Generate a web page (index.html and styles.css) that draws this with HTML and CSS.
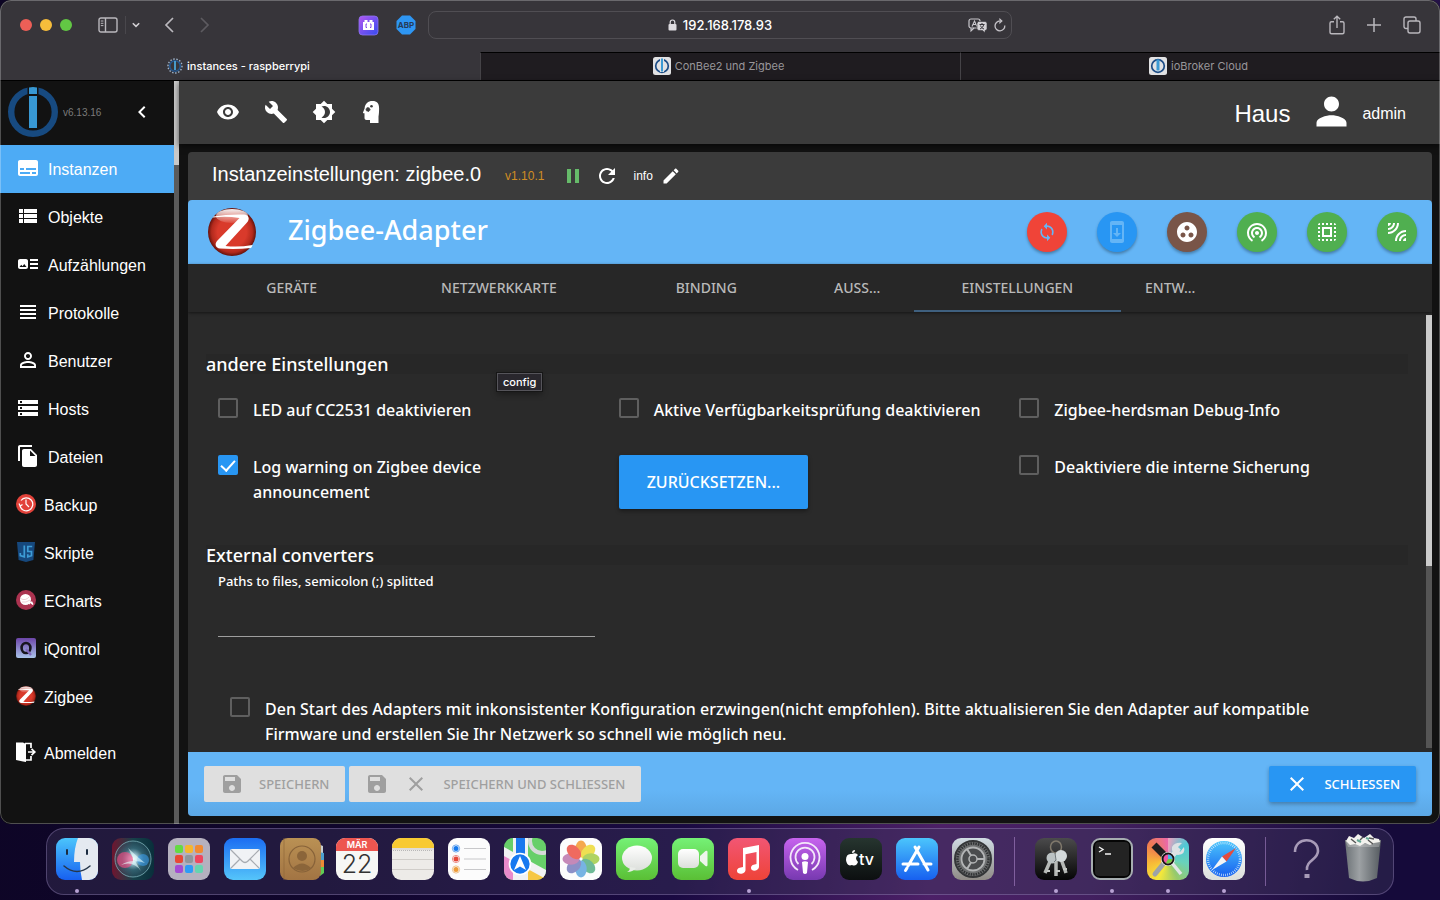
FILE: index.html
```html
<!DOCTYPE html>
<html lang="de">
<head>
    <meta charset="UTF-8">
    <meta name="viewport" content="width=device-width, initial-scale=1.0">
    <title>instances - raspberrypi</title>
    <link rel="stylesheet" href="styles.css">
</head>
<body>
    <div class="window">
        <header class="toolbar">
            <div class="toolbar-left">
                <span class="light red"></span>
                <span class="light yellow"></span>
                <span class="light green"></span>
                <button class="tool sidebar-toggle" aria-label="Seitenleiste"><svg width="20" height="16" viewBox="0 0 20 16" fill="none" stroke="#bab8bd" stroke-width="1.4"><rect x="1" y="1" width="18" height="14" rx="2"/><path d="M7.500 1v14"/><path d="M2.800 4h2.600M2.800 6.300h2.600M2.800 8.600h2.600" stroke-width="1"/></svg></button>
                <span class="tool-divider"></span>
                <button class="tool" aria-label="Tabgruppen"><svg width="8" height="8" viewBox="0 0 8 8" fill="none" stroke="#d0ced2" stroke-width="1.600"><path d="M.8 2.200L4 5.400l3.200-3.200"/></svg></button>
                <button class="tool back" aria-label="Zurück"><svg width="10" height="16" viewBox="0 0 10 16" fill="none" stroke="#bab8bd" stroke-width="1.700"><path d="M9 1L2 8l7 7"/></svg></button>
                <button class="tool forward" aria-label="Vorwärts"><svg width="10" height="16" viewBox="0 0 10 16" fill="none" stroke="#5d5b60" stroke-width="1.700"><path d="M1 1l7 7-7 7"/></svg></button>
                <span class="grow"></span>
                <button class="tool extension" aria-label="Erweiterung"><svg width="19" height="19" viewBox="0 0 19 19"><defs><linearGradient id="ext" x1="0" y1="0" x2="1" y2="1"><stop offset="0" stop-color="#b457f0"/><stop offset="1" stop-color="#344cf0"/></linearGradient></defs><rect width="19" height="19" rx="3.500" fill="url(#ext)" stroke="#8e74f0" stroke-width=".8"/><path d="M4 6h1.500V4h3v2h2V4h3v2H15v8H4z" fill="#fff"/><path d="M8 8H7v3.500h1M11 8h1v3.500h-1" stroke="#8049ee" fill="none"/></svg></button>
                <button class="tool" aria-label="Adblock Plus"><svg width="20" height="20" viewBox="0 0 20 20"><path d="M6 .5h8L19.500 6v8L14 19.500H6L.5 14V6z" fill="#2e96f3"/><text x="10" y="13" text-anchor="middle" class="abp">ABP</text></svg></button>
            </div>
            <div class="address">
                <svg width="9" height="12" viewBox="0 0 9 12"><path d="M2.200 5V3.300a2.300 2.300 0 014.600 0V5" fill="none" stroke="#dedce0" stroke-width="1.200"/><rect x=".5" y="5" width="8" height="6.500" rx="1" fill="#dedce0"/></svg>
                <span>192.168.178.93</span>
                <div class="address-tools">
                    <svg width="20" height="16" viewBox="0 0 20 16"><rect x="1" y="2" width="11" height="9" rx="2" fill="none" stroke="#c9c7cc" stroke-width="1.200"/><path d="M3 11v3l3-3M4 9.500L6.500 4 9 9.500M5 7.500h3" fill="none" stroke="#c9c7cc" stroke-width="1.100"/><path d="M10 4.500h7a2 2 0 012 2v5a2 2 0 01-2 2v2.300L14.500 13.500H11a2 2 0 01-2-2v-5z" fill="#d4d2d6" stroke="#37353a" stroke-width=".6"/><path d="M11.500 7.500h5M14 6v1.500M12 12c2-1 3.500-2.500 3.700-4.500M12.500 8.500c.6 1.800 2 3 3.500 3.500" stroke="#37353a" fill="none"/></svg>
                    <svg width="12" height="14" viewBox="0 0 12 14" fill="none" stroke="#c4c2c7" stroke-width="1.300"><path d="M10.800 7.500A4.900 4.900 0 116 3h1.500"/><path d="M5.300.6L7.800 3 5.300 5.400"/></svg>
                </div>
            </div>
            <div class="toolbar-right">
                <button class="tool" aria-label="Teilen"><svg width="16" height="20" viewBox="0 0 16 20" fill="none" stroke="#b9b7bc" stroke-width="1.400"><path d="M5 6.800H2.500a1.500 1.500 0 00-1.500 1.500v9A1.500 1.500 0 002.500 18.800h11a1.500 1.500 0 001.500-1.500v-9a1.500 1.500 0 00-1.500-1.500H11M8 13V1.500M4.800 4.300L8 1.200l3.200 3.100"/></svg></button>
                <button class="tool" aria-label="Neuer Tab"><svg width="14" height="14" viewBox="0 0 14 14" stroke="#b9b7bc" stroke-width="1.500"><path d="M7 0v14M0 7h14"/></svg></button>
                <button class="tool" aria-label="Tabübersicht"><svg width="18" height="18" viewBox="0 0 18 18" fill="none" stroke="#b9b7bc" stroke-width="1.400"><rect x="5" y="5" width="12" height="12" rx="2"/><path d="M5 12.500H3a2 2 0 01-2-2V3a2 2 0 012-2h8a2 2 0 012 2v2"/></svg></button>
            </div>
        </header>

        <nav class="browser-tabs">
            <a class="browser-tab current" href="#">
                <svg width="16" height="16" viewBox="0 0 16 16" fill="none"><circle cx="8" cy="8" r="7" stroke="#9fb4cb" stroke-width="1.400" stroke-dasharray="1.500 1.600"/><circle cx="8" cy="8" r="5.300" stroke="#24578f" stroke-width="1.600"/><path d="M8 3v9" stroke="#4ba6da" stroke-width="1.800"/></svg>
                instances - raspberrypi
            </a>
            <a class="browser-tab" href="#">
                <svg width="18" height="18" viewBox="0 0 18 18" fill="none"><rect width="18" height="18" rx="2.500" fill="#e2e2e4"/><circle cx="9" cy="9" r="6.300" stroke="#1c4c86" stroke-width="1.700"/><path d="M9 1v14" stroke="#e2e2e4" stroke-width="4"/><path d="M9 1.500v13" stroke="#3c9ad4" stroke-width="2"/></svg>
                ConBee2 und Zigbee
            </a>
            <a class="browser-tab" href="#">
                <svg width="18" height="18" viewBox="0 0 18 18" fill="none"><rect width="18" height="18" rx="2.500" fill="#e2e2e4"/><circle cx="9" cy="9" r="6.300" stroke="#1c4c86" stroke-width="1.700"/><path d="M9 2.500v11" stroke="#3c9ad4" stroke-width="3"/></svg>
                ioBroker Cloud
            </a>
        </nav>

        <div class="app">
            <aside class="sidebar">
                <div class="brand">
                    <svg width="50" height="50" viewBox="0 0 50 50"><circle cx="25" cy="25" r="21.800" fill="none" stroke="#174a80" stroke-width="6.400"/><path d="M19.500 0h11v9h-11z" fill="#121212"/><path d="M21 .5q4-.8 8 0V7h-8zM21 9h8v32h-8z" fill="#3898d3"/></svg>
                    <span class="version">v6.13.16</span>
                    <button class="icon-button collapse" aria-label="Menü schließen"><svg width="24" height="24" viewBox="0 0 24 24"><path d="M15.410 7.410L14 6l-6 6 6 6 1.410-1.410L10.830 12z"/></svg></button>
                </div>
                <nav class="menu">
                    <a class="menu-item active" href="#"><svg width="24" height="24" viewBox="0 0 24 24"><path d="M20 4H4c-1.100 0-2 .9-2 2v12c0 1.100.9 2 2 2h16c1.100 0 2-.9 2-2V6c0-1.100-.9-2-2-2zM4 12h4v2H4v-2zm10 6H4v-2h10v2zm6 0h-4v-2h4v2zm0-4H10v-2h10v2z"/></svg><span>Instanzen</span></a>
                    <a class="menu-item" href="#"><svg width="24" height="24" viewBox="0 0 24 24"><path d="M3 14h4v-4H3v4zm0 5h4v-4H3v4zM3 9h4V5H3v4zm5 5h13v-4H8v4zm0 5h13v-4H8v4zM8 5v4h13V5H8z"/></svg><span>Objekte</span></a>
                    <a class="menu-item" href="#"><svg width="24" height="24" viewBox="0 0 24 24"><path d="M22 13h-8v-2h8v2zm0-6h-8v2h8V7zm-8 10h8v-2h-8v2zm-2-8v6c0 1.100-.9 2-2 2H4c-1.100 0-2-.9-2-2V9c0-1.100.9-2 2-2h6c1.100 0 2 .9 2 2zm-1.500 6l-2.250-3-1.750 2.260-1.250-1.510L3.500 15h7z"/></svg><span>Aufzählungen</span></a>
                    <a class="menu-item" href="#"><svg width="24" height="24" viewBox="0 0 24 24"><path d="M4 15h16v-2H4v2zm0 4h16v-2H4v2zm0-8h16V9H4v2zm0-6v2h16V5H4z"/></svg><span>Protokolle</span></a>
                    <a class="menu-item" href="#"><svg width="24" height="24" viewBox="0 0 24 24"><path d="M12 5.900c1.160 0 2.100.94 2.100 2.100s-.94 2.100-2.100 2.100S9.900 9.160 9.900 8s.94-2.100 2.100-2.100m0 9c2.970 0 6.100 1.460 6.100 2.100v1.100H5.900V17c0-.64 3.130-2.100 6.100-2.100M12 4C9.790 4 8 5.790 8 8s1.790 4 4 4 4-1.790 4-4-1.790-4-4-4zm0 9c-2.670 0-8 1.340-8 4v3h16v-3c0-2.660-5.330-4-8-4z"/></svg><span>Benutzer</span></a>
                    <a class="menu-item" href="#"><svg width="24" height="24" viewBox="0 0 24 24"><path d="M2 20h20v-4H2v4zm2-3h2v2H4v-2zM2 4v4h20V4H2zm4 3H4V5h2v2zm-4 7h20v-4H2v4zm2-3h2v2H4v-2z"/></svg><span>Hosts</span></a>
                    <a class="menu-item" href="#"><svg width="24" height="24" viewBox="0 0 24 24"><path d="M16 1H4c-1.100 0-2 .9-2 2v14h2V3h12V1zm-1 4l6 6v10c0 1.100-.9 2-2 2H7.990C6.890 23 6 22.100 6 21V7c0-1.100.89-2 1.990-2h7zm-1 7h5.500L14 6.500V12z"/></svg><span>Dateien</span></a>
                    <a class="menu-item adapter" href="#"><svg width="20" height="20" viewBox="0 0 20 20" fill="none"><circle cx="10" cy="10" r="10" fill="#e2423a"/><path d="M4 12a6.500 6.500 0 101-5.500M3 9.500L4.200 12l2.300-1.500M10 5.500V10l3 3" stroke="#fff" stroke-width="1.200"/></svg><span>Backup</span></a>
                    <a class="menu-item adapter" href="#"><svg width="20" height="20" viewBox="0 0 20 20" fill="none"><path d="M1 0h18l-1.600 18L10 20l-7.400-2z" fill="#16487d"/><path d="M8.300 3.500v11.300l-4-1.200V11M16.200 4.500h-4.400v5h3.700v4.200l-3.700 1.100v-2.500" stroke="#3d9cd6" stroke-width="1.700"/></svg><span>Skripte</span></a>
                    <a class="menu-item adapter" href="#"><svg width="20" height="20" viewBox="0 0 20 20" fill="none"><circle cx="10" cy="10" r="10" fill="#ab3350"/><circle cx="9.500" cy="9.500" r="5.500" fill="#fff"/><path d="M4.500 8.500q5 3 9-2M6 12q4 1 8-2" stroke="#e8bcc7" stroke-width=".7"/><path d="M12 12.500l2 1.500M14 12l3 2.500-1.500-3" stroke="#fff" stroke-width="1.200"/></svg><span>ECharts</span></a>
                    <a class="menu-item adapter" href="#"><svg width="20" height="20" viewBox="0 0 20 20" fill="none"><defs><linearGradient id="iq" x2="0" y2="1"><stop stop-color="#6c45a8"/><stop offset="1" stop-color="#a9c3ea"/></linearGradient></defs><rect width="20" height="20" rx="2" fill="url(#iq)"/><ellipse cx="10" cy="10" rx="4.400" ry="5" stroke="#17151e" stroke-width="2.600"/><path d="M10 11l5 6" stroke="#8168bd" stroke-width="2.200"/></svg><span>iQontrol</span></a>
                    <a class="menu-item adapter" href="#"><svg width="20" height="20" viewBox="0 0 48 48"><use href="#zigbee-logo"/></svg><span>Zigbee</span></a>
                    <a class="menu-item adapter logout" href="#"><svg width="20" height="20" viewBox="0 0 20 20"><path d="M0 .5h7L10 2v18l-3-.5L0 18z"/><path d="M9 1.500h6V6M10 18h5v-4M12 10h6M15.500 6.800L18.800 10l-3.300 3.200" fill="none" stroke="#fff" stroke-width="1.700"/></svg><span>Abmelden</span></a>
                </nav>
            </aside>
            <div class="page-scroll"><div class="page-scroll-thumb"></div></div>

            <main class="main">
                <header class="appbar">
                    <button class="icon-button" aria-label="Ansicht"><svg width="24" height="24" viewBox="0 0 24 24"><path d="M12 4.500C7 4.500 2.730 7.610 1 12c1.730 4.390 6 7.500 11 7.500s9.270-3.110 11-7.500c-1.730-4.390-6-7.500-11-7.500zM12 17c-2.760 0-5-2.240-5-5s2.240-5 5-5 5 2.240 5 5-2.240 5-5 5zm0-8c-1.660 0-3 1.340-3 3s1.340 3 3 3 3-1.340 3-3-1.340-3-3-3z"/></svg></button>
                    <button class="icon-button" aria-label="Systemeinstellungen"><svg width="24" height="24" viewBox="0 0 24 24"><path d="M22.700 19l-9.100-9.100c.9-2.300.4-5-1.500-6.900-2-2-5-2.400-7.400-1.300L9 6 6 9 1.600 4.700C.4 7.100.9 10.100 2.900 12.100c1.900 1.900 4.600 2.400 6.900 1.500l9.100 9.100c.4.4 1 .4 1.400 0l2.300-2.300c.5-.4.5-1.100.1-1.400z"/></svg></button>
                    <button class="icon-button" aria-label="Farbschema"><svg width="24" height="24" viewBox="0 0 24 24"><path d="M20 8.690V4h-4.690L12 .69 8.690 4H4v4.690L.69 12 4 15.310V20h4.690L12 23.310 15.310 20H20v-4.690L23.310 12 20 8.690zM12 18c-.89 0-1.740-.2-2.500-.55C11.560 16.500 13 14.420 13 12s-1.440-4.500-3.500-5.450C10.260 6.200 11.110 6 12 6c3.310 0 6 2.690 6 6s-2.690 6-6 6z"/></svg></button>
                    <button class="icon-button" aria-label="Expertenmodus"><svg width="24" height="24" viewBox="0 0 24 24"><path d="M12.500 1C8 1 5 3.500 4.600 8.500L3 12.500c-.2.500 0 .8.500.8H4.500V18c0 1.200.8 2 2 2H10v3h8.500v-6.500C19 14 19.100 11 19.100 8 19.100 3.500 17 1 12.500 1z"/><circle cx="8" cy="9.500" r="2" fill="#3b3b3b" stroke="#3b3b3b" stroke-dasharray="1 .8"/><circle cx="11.500" cy="6.200" r="1.300" fill="#3b3b3b"/></svg></button>
                    <span class="grow"></span>
                    <span class="host">Haus</span>
                    <svg class="avatar" width="45" height="45" viewBox="0 0 24 24"><path d="M12 12c2.210 0 4-1.790 4-4s-1.790-4-4-4-4 1.790-4 4 1.790 4 4 4zm0 2c-2.670 0-8 1.340-8 4v2h16v-2c0-2.660-5.330-4-8-4z"/></svg>
                    <span class="user">admin</span>
                </header>

                <section class="panel">
                    <div class="panel-title">
                        <h1>Instanzeinstellungen: zigbee.0</h1>
                        <span class="adapter-version">v1.10.1</span>
                        <button class="icon-button small" aria-label="Pause"><svg width="20" height="24" viewBox="0 0 20 24"><path d="M4 5h4v14H4zm8 0h4v14h-4z" fill="#66bb6a"/></svg></button>
                        <button class="icon-button small" aria-label="Neu starten"><svg width="24" height="24" viewBox="0 0 24 24"><path d="M17.650 6.350C16.200 4.900 14.210 4 12 4c-4.420 0-7.990 3.580-7.990 8s3.570 8 7.990 8c3.730 0 6.840-2.550 7.730-6h-2.080c-.82 2.330-3.040 4-5.650 4-3.310 0-6-2.690-6-6s2.690-6 6-6c1.660 0 3.140.69 4.220 1.780L13 11h7V4l-2.350 2.350z"/></svg></button>
                        <button class="log-level">info <svg width="20" height="20" viewBox="0 0 24 24"><path d="M3 17.250V21h3.750L17.810 9.940l-3.750-3.750L3 17.250zM20.710 7.040c.39-.39.39-1.020 0-1.410l-2.340-2.340c-.39-.39-1.020-.39-1.410 0l-1.830 1.830 3.750 3.750 1.830-1.830z"/></svg></button>
                    </div>

                    <div class="adapter-header">
                        <svg width="48" height="48" viewBox="0 0 48 48">
                            <defs>
                                <radialGradient id="zb" cx=".5" cy=".5" r=".5"><stop offset=".6" stop-color="#d93a2b"/><stop offset=".85" stop-color="#b32a1d"/><stop offset="1" stop-color="#64120c"/></radialGradient>
                                <linearGradient id="gloss" x2="0" y2="1"><stop stop-color="#fff" stop-opacity=".95"/><stop offset="1" stop-color="#fff" stop-opacity=".1"/></linearGradient>
                                <g id="zigbee-logo"><circle cx="24" cy="24" r="24" fill="url(#zb)"/><ellipse cx="24" cy="8" rx="16" ry="7" fill="url(#gloss)"/><path d="M5.500 8.500Q20 6 36 6.500C41 7 42 11 39 14.500L17.500 38q13 1.500 27-1-.5 2-1.500 3Q28 41.500 12 40.500C7.500 40 6.500 36 9 33L31.500 10Q18 8 5 9.500z" fill="#fff"/></g>
                            </defs>
                            <use href="#zigbee-logo"/>
                        </svg>
                        <h2>Zigbee-Adapter</h2>
                        <div class="actions">
                            <button class="round red" aria-label="Zurücksetzen"><svg width="20" height="20" viewBox="0 0 24 24"><path d="M12 4V1L8 5l4 4V6c3.310 0 6 2.690 6 6 0 1.010-.25 1.970-.7 2.800l1.460 1.460C19.540 15.030 20 13.570 20 12c0-4.420-3.580-8-8-8zm0 14c-3.310 0-6-2.690-6-6 0-1.010.25-1.970.7-2.800L5.240 7.740C4.460 8.970 4 10.430 4 12c0 4.420 3.580 8 8 8v3l4-4-4-4v3z"/></svg></button>
                            <button class="round blue" aria-label="Firmware-Update"><svg width="24" height="24" viewBox="0 0 24 24"><path d="M17 1.010L7 1c-1.100 0-2 .9-2 2v18c0 1.100.9 2 2 2h10c1.100 0 2-.9 2-2V3c0-1.100-.9-1.990-2-1.990zM17 19H7V5h10v14zm-1-6h-3V8h-2v5H8l4 4 4-4z"/></svg></button>
                            <button class="round brown" aria-label="Gruppen"><svg width="24" height="24" viewBox="0 0 24 24"><path d="M12 2C6.480 2 2 6.480 2 12s4.480 10 10 10 10-4.480 10-10S17.520 2 12 2zM8 17.500c-1.380 0-2.500-1.120-2.500-2.500s1.120-2.500 2.500-2.500 2.500 1.120 2.500 2.500-1.120 2.500-2.500 2.500zM9.500 8c0-1.380 1.120-2.500 2.500-2.500s2.500 1.120 2.500 2.500-1.120 2.500-2.500 2.500S9.500 9.380 9.500 8zm6.500 9.500c-1.380 0-2.500-1.120-2.500-2.500s1.120-2.500 2.500-2.500 2.500 1.120 2.500 2.500-1.120 2.500-2.500 2.500z"/></svg></button>
                            <button class="round green" aria-label="Touchlink"><svg width="24" height="24" viewBox="0 0 24 24"><path d="M12 11c-1.100 0-2 .9-2 2s.9 2 2 2 2-.9 2-2-.9-2-2-2zm6 2c0-3.310-2.690-6-6-6s-6 2.690-6 6c0 2.220 1.210 4.150 3 5.190l1-1.740c-1.190-.7-2-1.970-2-3.450 0-2.210 1.790-4 4-4s4 1.790 4 4c0 1.480-.81 2.750-2 3.450l1 1.740c1.790-1.040 3-2.970 3-5.190zM12 3C6.480 3 2 7.480 2 13c0 3.700 2.010 6.920 4.990 8.650l1-1.730C5.610 18.530 4 15.960 4 13c0-4.420 3.580-8 8-8s8 3.580 8 8c0 2.960-1.610 5.530-4 6.920l1 1.730c2.990-1.730 5-4.950 5-8.650 0-5.520-4.480-10-10-10z"/></svg></button>
                            <button class="round green" aria-label="Alle auswählen"><svg width="24" height="24" viewBox="0 0 24 24"><path d="M3 5h2V3c-1.100 0-2 .9-2 2zm0 8h2v-2H3v2zm4 8h2v-2H7v2zM3 9h2V7H3v2zm10-6h-2v2h2V3zm6 0v2h2c0-1.100-.9-2-2-2zM5 21v-2H3c0 1.100.9 2 2 2zm-2-4h2v-2H3v2zM9 3H7v2h2V3zm2 18h2v-2h-2v2zm8-8h2v-2h-2v2zm0 8c1.100 0 2-.9 2-2h-2v2zm0-12h2V7h-2v2zm0 8h2v-2h-2v2zm-4 4h2v-2h-2v2zm0-16h2V3h-2v2zM7 17h10V7H7v10zm2-8h6v6H9V9z"/></svg></button>
                            <button class="round green" aria-label="Anlernen"><svg width="24" height="24" viewBox="0 0 24 24"><path d="M6 3H3v3c1.660 0 3-1.340 3-3zm8 0h-2c0 4.970-4.030 9-9 9v2c6.080 0 11-4.930 11-11zm-4 0H8c0 2.760-2.240 5-5 5v2c3.870 0 7-3.130 7-7zm0 18h2c0-4.970 4.030-9 9-9v-2c-6.070 0-11 4.930-11 11zm8 0h3v-3c-1.660 0-3 1.340-3 3zm-4 0h2c0-2.760 2.240-5 5-5v-2c-3.870 0-7 3.130-7 7z"/></svg></button>
                        </div>
                    </div>

                    <nav class="tabs">
                        <a class="tab wide" href="#">GERÄTE</a>
                        <a class="tab wide" href="#">NETZWERKKARTE</a>
                        <a class="tab wide" href="#">BINDING</a>
                        <a class="tab" href="#">AUSS...</a>
                        <a class="tab wide selected" href="#">EINSTELLUNGEN</a>
                        <a class="tab" href="#">ENTW...</a>
                    </nav>

                    <div class="content">
                        <form class="settings">
                            <h3>andere Einstellungen</h3>
                            <div class="options">
                                <label class="check"><input type="checkbox"><span>LED auf CC2531 deaktivieren</span></label>
                                <label class="check"><input type="checkbox"><span>Aktive Verfügbarkeitsprüfung deaktivieren</span></label>
                                <label class="check"><input type="checkbox"><span>Zigbee-herdsman Debug-Info</span></label>
                                <label class="check"><input type="checkbox" checked><span>Log warning on Zigbee device announcement</span></label>
                                <div><button type="button" class="reset">ZURÜCKSETZEN...</button></div>
                                <label class="check"><input type="checkbox"><span>Deaktiviere die interne Sicherung</span></label>
                            </div>
                            <h3>External converters</h3>
                            <div class="field">
                                <label for="converters">Paths to files, semicolon (;) splitted</label>
                                <input type="text" id="converters">
                            </div>
                            <label class="check force"><input type="checkbox"><span>Den Start des Adapters mit inkonsistenter Konfiguration erzwingen(nicht empfohlen). Bitte aktualisieren Sie den Adapter auf kompatible Firmware und erstellen Sie Ihr Netzwerk so schnell wie möglich neu.</span></label>
                        </form>
                        <div class="content-scroll"><div class="content-scroll-thumb"></div></div>
                    </div>
                    <div class="tooltip">config</div>

                    <footer class="footer">
                        <button class="action" disabled><svg width="24" height="24" viewBox="0 0 24 24"><path d="M17 3H5c-1.110 0-2 .9-2 2v14c0 1.100.89 2 2 2h14c1.100 0 2-.9 2-2V7l-4-4zm-5 16c-1.660 0-3-1.340-3-3s1.340-3 3-3 3 1.340 3 3-1.340 3-3 3zm3-10H5V5h10v4z"/></svg>SPEICHERN</button>
                        <button class="action" disabled><svg width="24" height="24" viewBox="0 0 24 24"><path d="M17 3H5c-1.110 0-2 .9-2 2v14c0 1.100.89 2 2 2h14c1.100 0 2-.9 2-2V7l-4-4zm-5 16c-1.660 0-3-1.340-3-3s1.340-3 3-3 3 1.340 3 3-1.340 3-3 3zm3-10H5V5h10v4z"/></svg><svg width="24" height="24" viewBox="0 0 24 24"><path d="M19 6.410L17.590 5 12 10.590 6.410 5 5 6.410 10.590 12 5 17.590 6.410 19 12 13.410 17.590 19 19 17.590 13.410 12z"/></svg>SPEICHERN UND SCHLIESSEN</button>
                        <span class="grow"></span>
                        <button class="action primary"><svg width="24" height="24" viewBox="0 0 24 24"><path d="M19 6.410L17.590 5 12 10.590 6.410 5 5 6.410 10.590 12 5 17.590 6.410 19 12 13.410 17.590 19 19 17.590 13.410 12z"/></svg>SCHLIESSEN</button>
                    </footer>
                </section>
            </main>
        </div>
    </div>

    <nav class="dock">
        <!-- gradients shared by the dock icons -->
        <svg class="defs" width="0" height="0">
            <defs>
                <linearGradient id="blue" x2="0" y2="1"><stop stop-color="#1b6df2"/><stop offset="1" stop-color="#55c5fa"/></linearGradient>
                <linearGradient id="sky" x2="0" y2="1"><stop stop-color="#4bc5fc"/><stop offset="1" stop-color="#1760f0"/></linearGradient>
                <linearGradient id="lime" x2="0" y2="1"><stop stop-color="#75f176"/><stop offset="1" stop-color="#5abf35"/></linearGradient>
                <linearGradient id="white" x2="0" y2="1"><stop stop-color="#fff"/><stop offset="1" stop-color="#dcdfdb"/></linearGradient>
                <linearGradient id="rose" x2="0" y2="1"><stop stop-color="#f25674"/><stop offset="1" stop-color="#ee4338"/></linearGradient>
                <linearGradient id="violet" x2="0" y2="1"><stop stop-color="#c763ee"/><stop offset="1" stop-color="#7739b0"/></linearGradient>
                <linearGradient id="black" x2="0" y2="1"><stop stop-color="#26352f"/><stop offset="1" stop-color="#0c0f10"/></linearGradient>
                <linearGradient id="grey" x2="0" y2="1"><stop stop-color="#d0dbe3"/><stop offset="1" stop-color="#8f8b86"/></linearGradient>
                <linearGradient id="wood" x2="0" y2="1"><stop stop-color="#ba9154"/><stop offset="1" stop-color="#a27443"/></linearGradient>
                <linearGradient id="siri" x2="1"><stop stop-color="#70152f"/><stop offset=".5" stop-color="#17414a"/><stop offset="1" stop-color="#092f3b"/></linearGradient>
                <radialGradient id="orb"><stop stop-color="#fff"/><stop offset=".25" stop-color="#a6cdda"/><stop offset=".6" stop-color="#3d7081" stop-opacity=".7"/><stop offset="1" stop-color="#335566" stop-opacity=".4"/></radialGradient>
                <linearGradient id="keys" x2="0" y2="1"><stop stop-color="#4b4b4c"/><stop offset="1" stop-color="#050505"/></linearGradient>
                <linearGradient id="can" x2="1"><stop stop-color="#6c7276"/><stop offset=".4" stop-color="#9da1a4"/><stop offset="1" stop-color="#555b60"/></linearGradient>
                <clipPath id="tile"><rect width="42" height="42" rx="9"/></clipPath>
            </defs>
        </svg>
        <button class="dock-item running" aria-label="Finder"><svg viewBox="0 0 42 42"><g clip-path="url(#tile)"><path d="M0 0h42v42H0z" fill="url(#sky)"/><path d="M22 0q-4 10-4 24h6q0 9 2 18h16V0z" fill="#e4e9f0"/></g><path d="M11 12v4M31 12v4" stroke="#1b2b40" stroke-width="2" stroke-linecap="round"/><path d="M8 28q13 11 26 0" fill="none" stroke="#26364a" stroke-width="1.500" stroke-linecap="round"/></svg></button>
        <button class="dock-item" aria-label="Siri"><svg viewBox="0 0 42 42"><rect width="42" height="42" rx="9" fill="url(#siri)"/><circle cx="21" cy="21" r="18" fill="url(#orb)" stroke="#7aafb7" stroke-width=".8"/><circle cx="13" cy="22" r="8" fill="#f14b83" opacity=".65"/><circle cx="31" cy="22" r="6" fill="#3b9bea" opacity=".6"/><path d="M9 27Q19 20 33 25Q24 18 16 10Q22 22 29 33Q21 22 9 27z" fill="#e7ffff" opacity=".6"/></svg></button>
        <button class="dock-item" aria-label="Launchpad"><svg viewBox="0 0 42 42"><rect width="42" height="42" rx="9" fill="#b5b1bf"/><rect x="7" y="7" width="8" height="8" rx="2" fill="#64db43"/><rect x="17" y="7" width="8" height="8" rx="2" fill="#f5b62f"/><rect x="27" y="7" width="8" height="8" rx="2" fill="#f08a33"/><rect x="7" y="17" width="8" height="8" rx="2" fill="#e84835"/><rect x="17" y="17" width="8" height="8" rx="2" fill="#8f969b"/><rect x="27" y="17" width="8" height="8" rx="2" fill="#ee465f"/><rect x="7" y="27" width="8" height="8" rx="2" fill="#a44bd2"/><rect x="17" y="27" width="8" height="8" rx="2" fill="#2e9cf6"/><rect x="27" y="27" width="8" height="8" rx="2" fill="#66d4b0"/></svg></button>
        <button class="dock-item" aria-label="Mail"><svg viewBox="0 0 42 42"><rect width="42" height="42" rx="9" fill="url(#blue)"/><rect x="6" y="11" width="30" height="20" rx="2" fill="#f0f2f5"/><path d="M7 12l11 11q3 3 6 0l11-11M7 30l9-9M35 30l-9-9" fill="none" stroke="#a7abb1" stroke-width="1.200"/></svg></button>
        <button class="dock-item" aria-label="Kontakte"><svg viewBox="0 0 42 42"><path d="M38 6l5 2v8h-4z" fill="#c8ccd0"/><path d="M38 14l6 1v7h-5z" fill="#4c9fd0"/><path d="M38 22h6v7h-5z" fill="#ee8a35"/><path d="M38 29h6v6l-4 3z" fill="#5fce54"/><rect width="41" height="42" rx="8" fill="url(#wood)"/><path d="M4 0v42" stroke="#8f6739" stroke-width=".7"/><g fill="#8b653a"><circle cx="22" cy="18" r="5"/><path d="M13 30q9-9 18 0-8 6-18 0z"/></g><circle cx="22" cy="21" r="13" fill="none" stroke="#876239" stroke-width="1.200"/></svg></button>
        <button class="dock-item calendar" aria-label="Kalender"><span class="month">MÄR</span><span class="day">22</span></button>
        <button class="dock-item" aria-label="Notizen"><svg viewBox="0 0 42 42"><g clip-path="url(#tile)"><path d="M0 0h42v42H0z" fill="#edebe8"/><path d="M0 0h42v10H0z" fill="#f8ca32"/></g><path d="M0 11h42M0 21.500h42M0 31.500h42" stroke="#c8c5c0" stroke-width=".8"/><path d="M1 12.500h40" stroke="#aaa" stroke-dasharray="1 1" stroke-width=".8"/></svg></button>
        <button class="dock-item" aria-label="Erinnerungen"><svg viewBox="0 0 42 42"><rect width="42" height="42" rx="9" fill="#fcfcfc"/><path d="M16 10.500h22M16 21h22M16 31.500h22" stroke="#c8c8ca"/><g stroke-width="1"><circle cx="8" cy="10.500" r="2.500" fill="#1479ee"/><circle cx="8" cy="10.500" r="3.600" fill="none" stroke="#6ba7ee"/><circle cx="8" cy="21" r="2.500" fill="#e64738"/><circle cx="8" cy="21" r="3.600" fill="none" stroke="#eb9189"/><circle cx="8" cy="31.500" r="2.500" fill="#ed9b38"/><circle cx="8" cy="31.500" r="3.600" fill="none" stroke="#efc38c"/></g></svg></button>
        <button class="dock-item" aria-label="Karten"><svg viewBox="0 0 42 42"><g clip-path="url(#tile)"><path d="M0 0h42v42H0z" fill="#67cf69"/><path d="M0 17l16 6v19H0z" fill="#e88bcb"/><path d="M15 42l8-12 19 7v5z" fill="#f6c744"/><path d="M0 9L42 32v9L0 18z" fill="#f1f2f3"/><path d="M9 0h15v42H9z" fill="#f1f2f3"/><path d="M12 0h9v24h-9z" fill="#1978ee"/><circle cx="38" cy="3" r="12" fill="none" stroke="#d5dad8" stroke-width="4"/></g><circle cx="16" cy="26" r="10.500" fill="#1779f0" stroke="#fff" stroke-width="1.700"/><path d="M16 18l6 14-6-3.500L10 32z" fill="#fff"/></svg></button>
        <button class="dock-item" aria-label="Fotos"><svg viewBox="0 0 42 42"><rect width="42" height="42" rx="9" fill="#fcfcfc"/><g opacity=".85"><ellipse cx="21" cy="11" rx="5.700" ry="8.500" fill="#f49a31"/><ellipse cx="21" cy="11" rx="5.700" ry="8.500" fill="#eddb35" transform="rotate(45 21 21)"/><ellipse cx="21" cy="11" rx="5.700" ry="8.500" fill="#a2cc47" transform="rotate(90 21 21)"/><ellipse cx="21" cy="11" rx="5.700" ry="8.500" fill="#57af85" transform="rotate(135 21 21)"/><ellipse cx="21" cy="11" rx="5.700" ry="8.500" fill="#60a7df" transform="rotate(180 21 21)"/><ellipse cx="21" cy="11" rx="5.700" ry="8.500" fill="#797ebe" transform="rotate(225 21 21)"/><ellipse cx="21" cy="11" rx="5.700" ry="8.500" fill="#bc75ad" transform="rotate(270 21 21)"/><ellipse cx="21" cy="11" rx="5.700" ry="8.500" fill="#ed5144" transform="rotate(315 21 21)"/></g></svg></button>
        <button class="dock-item" aria-label="Nachrichten"><svg viewBox="0 0 42 42"><rect width="42" height="42" rx="9" fill="url(#lime)"/><ellipse cx="21" cy="20" rx="15" ry="12.500" fill="url(#white)"/><path d="M14 29q0 4-3 5 6 0 9-4z" fill="#e9ece8"/></svg></button>
        <button class="dock-item" aria-label="FaceTime"><svg viewBox="0 0 42 42"><rect width="42" height="42" rx="9" fill="url(#lime)"/><rect x="6" y="11" width="21" height="19" rx="5" fill="url(#white)"/><path d="M28 18l5.500-5q2-1 2 1v13q0 2-2 1L28 23z" fill="#edf5eb"/></svg></button>
        <button class="dock-item running" aria-label="Musik"><svg viewBox="0 0 42 42"><rect width="42" height="42" rx="9" fill="url(#rose)"/><path d="M15 10l16-3v21.500c0 5-8 5.500-8 1.500 0-3 3-3.500 5.500-4V14l-11 2.200V32c0 4.500-8.500 5-8.500 1 0-3 3-3.500 6-4z" fill="#fff"/></svg></button>
        <button class="dock-item" aria-label="Podcasts"><svg viewBox="0 0 42 42"><rect width="42" height="42" rx="9" fill="url(#violet)"/><g fill="none" stroke="#f4e8fa" stroke-width="1.800"><path d="M14 32a14.500 14.500 0 1114 0"/><path d="M14.500 26a9.500 9.500 0 1113 0"/></g><circle cx="21" cy="18.500" r="3.500" fill="#fff"/><path d="M18 24q3-1.500 6 0l-1 11q-2 2-4 0z" fill="#fff"/></svg></button>
        <button class="dock-item" aria-label="TV"><svg viewBox="0 0 42 42"><rect width="42" height="42" rx="9" fill="url(#black)"/><path d="M12 16q4-2 6 1-4 3 0 7-2 5-6 3-5 2-6-5 0-7 6-6zM12 15q0-3 3-3 0 3-3 3z" fill="#fff"/><text x="19" y="27" class="tv">tv</text></svg></button>
        <button class="dock-item" aria-label="App Store"><svg viewBox="0 0 42 42"><rect width="42" height="42" rx="9" fill="url(#sky)"/><path d="M23 9L12 28M19 9l13 23M7 26h15M28 26h7M11 30l-1.500 2.500" stroke="#fff" stroke-width="3" stroke-linecap="round"/></svg></button>
        <button class="dock-item" aria-label="Systemeinstellungen"><svg viewBox="0 0 42 42" fill="none"><rect width="42" height="42" rx="9" fill="url(#grey)"/><circle cx="21" cy="21" r="18" fill="#6e7071" stroke="#343638" stroke-width="2"/><circle cx="21" cy="21" r="15.500" stroke="#303234" stroke-width="2.500" stroke-dasharray="1.500 1"/><circle cx="21" cy="21" r="11.500" fill="#4a4c4e" stroke="#b3b5b6" stroke-width="1.800"/><circle cx="21" cy="21" r="4" stroke="#b3b5b6" stroke-width="1.500"/><path d="M25 21h8M19 24.500L15 31M19 17.500L15 11" stroke="#b3b5b6" stroke-width="2"/></svg></button>
        <span class="dock-divider"></span>
        <button class="dock-item running" aria-label="Schlüsselbund"><svg viewBox="0 0 42 42" fill="none"><rect width="42" height="42" rx="9" fill="url(#keys)"/><ellipse cx="21" cy="9" rx="5.500" ry="6" stroke="#80796c" stroke-width="1.500"/><path d="M17 19L10 35M25 18l6 17M21 20v18" stroke="#b6b9b6" stroke-width="3.500"/><path d="M12 33h3M21 33h4M28 31h4" stroke="#c6c9c5" stroke-width="2"/><circle cx="17" cy="20" r="5.500" fill="#bbc2c3"/><circle cx="26" cy="18" r="6" fill="#d3d9da"/><path d="M20 15l1 7-2 2" stroke="#707779"/></svg></button>
        <button class="dock-item running" aria-label="Terminal"><svg viewBox="0 0 42 42" fill="none"><rect x="1" y="1" width="40" height="40" rx="8" fill="#050505" stroke="#a6adb0" stroke-width="2"/><rect x="4" y="4" width="34" height="34" rx="4" fill="#232323"/><path d="M8 9l4 2.500L8 14M14 16h6" stroke="#f4f4f4" stroke-width="1.400"/></svg></button>
        <button class="dock-item running" aria-label="ColorSync"><div class="color-tile"><svg viewBox="0 0 42 42" fill="none"><path d="M7 7l10 10" stroke="#211f20" stroke-width="7"/><path d="M17 25L8 36" stroke="#9ea3a7" stroke-width="5" stroke-linecap="round"/><path d="M26 17l6-7" stroke="#dce2e4" stroke-width="5"/><path d="M35 5l-5 5 3 4 4-5q2 7-6 8-7-1-6-8 3-5 10-4z" fill="#dce2e4"/><path d="M25 25l9 11" stroke="#e1e5e6" stroke-width="3.500"/><circle cx="21" cy="21" r="7" fill="#fff"/><circle cx="21" cy="21" r="5.500" fill="#ee53a2" stroke="#161616" stroke-width="2"/><path d="M21 21V16.500a4.500 4.500 0 014.500 4.500z" fill="#42bde9"/><path d="M21 21h4.500a4.500 4.500 0 01-6.500 4z" fill="#72ce43"/></svg></div></button>
        <button class="dock-item running" aria-label="Safari"><svg viewBox="0 0 42 42" fill="none"><rect width="42" height="42" rx="9" fill="url(#white)"/><circle cx="21" cy="21" r="18" fill="url(#sky)"/><circle cx="21" cy="21" r="16" stroke="#d7edfc" stroke-width="2.400" stroke-dasharray=".7 1.400"/><path d="M33 10L23.500 23.500 19 18.500z" fill="#e44b3d"/><path d="M9 32l10-13.500 4.500 5z" fill="#f4f5f6"/></svg></button>
        <span class="dock-divider"></span>
        <button class="dock-item" aria-label="Unbekanntes Programm"><svg viewBox="0 0 42 42" fill="none"><path d="M9 14c0-16 23-15 23-1 0 9-12 9-11 19" stroke="#a89bb8" stroke-width="2.600"/><path d="M18.500 36h5v4h-5z" fill="#a89bb8"/></svg></button>
        <button class="dock-item" aria-label="Papierkorb"><svg viewBox="0 0 42 42" fill="none"><path d="M3 2l4 38q14 7 28 0l4-38z" fill="url(#can)"/><path d="M3 2q18 8 36 0l-2 7H6z" fill="#d5d5d3" opacity=".35"/><path d="M4 3l3-5 5 2 4-4 6 4 6-4 4 4 5 1 1 3-6 1-4 2-5-2-5 3-5-2-5 1z" fill="#f3f2ee"/><path d="M9 1l5 4M18 2l3-3M26 2l5 4M32 1l-5-1" stroke="#555" stroke-width="1.400"/><path d="M15 2l4 2M24 0l3 1" stroke="#63a795" stroke-width="2"/></svg></button>
    </nav>
</body>
</html>
```
FILE: styles.css
```css
* {
    box-sizing: border-box;
}
body {
    display: flex;
    flex-direction: column;
    height: 100vh;
    margin: 0;
    overflow: hidden;
    color: #fff;
    font-family: "Liberation Sans", Arial, sans-serif;
    font-size: 16px;
    background: linear-gradient(100deg, #0d0524 0%, #10062c 30%, #1a0a42 52%, #4c2067 68%, #42205f 78%, #150a3a 96%);
}
button {
    display: flex;
    align-items: center;
    justify-content: center;
    padding: 0;
    border: none;
    background: none;
    color: inherit;
    font: inherit;
    cursor: pointer;
}
a {
    color: inherit;
    text-decoration: none;
}
svg {
    display: block;
    flex: none;
    overflow: visible;
}
h1,
h2,
h3 {
    margin: 0;
    font-weight: 500;
}
.grow {
    flex: 1;
}

/* browser window */
.window {
    position: relative;
    display: flex;
    flex: 1;
    flex-direction: column;
    min-height: 0;
    overflow: hidden;
    border-radius: 11px;
    background: #121212;
}
.window::after {
    content: "";
    position: absolute;
    inset: 0;
    border: 1px solid rgba(255, 255, 255, 0.26);
    border-radius: 11px;
    pointer-events: none;
}
.toolbar {
    display: grid;
    grid-template-columns: 1fr minmax(200px, 584px) 1fr;
    align-items: center;
    height: 52px;
    padding-bottom: 2px;
    background: #37353a;
}
.toolbar-left,
.toolbar-right {
    display: flex;
    align-items: center;
}
.toolbar-left {
    gap: 8px;
    padding: 0 12px 0 20px;
}
.toolbar-right {
    justify-content: flex-end;
    gap: 22px;
    padding-right: 19px;
}
.light {
    width: 12px;
    height: 12px;
    border-radius: 50%;
}
.light.red {
    background: #ed5f57;
}
.light.yellow {
    background: #f6bd3b;
}
.light.green {
    background: #62c744;
}
.sidebar-toggle {
    margin-left: 18px;
}
.tool-divider {
    width: 1px;
    height: 18px;
    margin: 0 -2px 0 -1px;
    background: #49474c;
}
.back {
    margin-left: 16px;
}
.forward {
    margin-left: 18px;
}
.extension {
    margin-right: 10px;
}
.abp {
    fill: #263c58;
    font: bold 8px "Inter", sans-serif;
}
.address {
    position: relative;
    display: flex;
    align-items: center;
    justify-content: center;
    gap: 6px;
    height: 28px;
    border: 1px solid #504e53;
    border-radius: 8px;
    font: 500 13px "Inter", sans-serif;
}
.address-tools {
    position: absolute;
    right: 5px;
    display: flex;
    align-items: center;
    gap: 6px;
}
.browser-tabs {
    display: grid;
    grid-template-columns: repeat(3, 1fr);
    height: 29px;
    border-bottom: 1px solid #000;
    background: #1f1c20;
}
.browser-tab {
    display: flex;
    align-items: center;
    justify-content: center;
    gap: 4px;
    padding: 0 4px 1px 0;
    border-top: 1px solid #000;
    border-left: 1px solid #454347;
    color: #98969a;
    font: 11px "Inter", sans-serif;
}
.browser-tab.current {
    border-color: #37353a;
    background: #37353a;
    color: #fff;
    font-weight: 500;
}

/* sidebar */
.app {
    display: flex;
    flex: 1;
    min-height: 0;
}
.sidebar {
    width: 174px;
    background: #121212;
}
.brand {
    display: flex;
    align-items: center;
    height: 64px;
    padding: 0 8px 2px;
}
.version {
    margin-left: 5px;
    color: #7b7b7b;
    font-size: 10px;
}
.icon-button {
    width: 48px;
    height: 48px;
    fill: #fff;
}
.collapse {
    margin-left: 17px;
}
.menu-item {
    display: flex;
    align-items: center;
    gap: 8px;
    height: 48px;
    padding: 0 0 2px 16px;
    fill: #fff;
}
.menu-item span {
    padding-top: 4px;
}
.menu-item.active {
    background: #4dabf5;
}
.logout {
    margin-top: 8px;
}
.page-scroll {
    width: 5px;
    background: #5b5b5b;
}
.page-scroll-thumb {
    height: 84px;
    background: #c8c8c8;
}

/* admin page */
.main {
    display: flex;
    flex: 1;
    flex-direction: column;
    min-width: 0;
}
.appbar {
    display: flex;
    align-items: center;
    height: 63px;
    padding: 0 34px 2px 25px;
    background: #3b3b3b;
    box-shadow: 0 2px 6px rgba(0, 0, 0, 0.6);
}
.host {
    padding-top: 4px;
    font-size: 24px;
}
.avatar {
    margin: 0 8px 0 19px;
    fill: #fff;
}
.user {
    padding-top: 4px;
}
.panel {
    position: relative;
    display: flex;
    flex: 1;
    flex-direction: column;
    min-height: 0;
    margin: 8px 8px 8px 9px;
    overflow: hidden;
    border-radius: 4px;
    background: #3b3b3b;
    font-family: "Noto Sans", "Lucida Grande", sans-serif;
    font-weight: 500;
}
.panel-title {
    display: flex;
    align-items: center;
    height: 48px;
    padding-left: 24px;
    font-family: "Liberation Sans", Arial, sans-serif;
    font-weight: normal;
}
.panel-title h1 {
    padding-bottom: 4px;
    font-size: 20px;
}
.adapter-version {
    margin: 0 17px 0 24px;
    color: #d08d23;
    font-size: 12px;
}
.icon-button.small {
    width: 24px;
    height: 24px;
    margin-right: 10px;
}
.log-level {
    gap: 8px;
    margin-left: 4px;
    fill: #fff;
    font-size: 12px;
}
.adapter-header {
    display: flex;
    align-items: center;
    height: 64px;
    padding: 0 15px 0 20px;
    border-radius: 4px 4px 0 0;
    background: #64b5f6;
}
.adapter-header h2 {
    margin-left: 32px;
    padding-bottom: 4px;
    font-size: 27px;
    line-height: 32px;
}
.actions {
    display: flex;
    gap: 30px;
    margin-left: auto;
}
.round {
    width: 40px;
    height: 40px;
    border-radius: 50%;
    fill: #fff;
    box-shadow: 0 2px 3px rgba(0, 0, 0, 0.3);
}
.round.red {
    background: #f04438;
    fill: #64b5f6;
}
.round.blue {
    background: #2896f3;
    fill: #64b5f6;
}
.round.brown {
    background: #795548;
}
.round.green {
    background: #50af50;
}
.tabs {
    z-index: 1;
    display: grid;
    grid-template-columns: repeat(12, 1fr);
    height: 48px;
    background: #272727;
    box-shadow: 0 1px 3px rgba(0, 0, 0, 0.5);
}
.tab {
    height: 48px;
    padding-left: 24px;
    color: #b9b9b9;
    font-size: 14px;
    line-height: 48px;
    white-space: nowrap;
}
.tab.wide {
    grid-column: span 2;
    padding: 0;
    text-align: center;
}
.tab.selected {
    border-bottom: 2px solid #3f607f;
}
.content {
    display: flex;
    flex: 1;
    min-height: 0;
    background: #2a2a2a;
}
.settings {
    flex: 1;
    padding: 42px 18px 0;
    overflow: hidden;
}
.settings h3 {
    height: 20px;
    background: #272727;
    font-size: 18px;
    line-height: 20px;
}
.options {
    display: grid;
    grid-template-columns: repeat(3, 1fr);
    row-gap: 32px;
    padding: 24px 0 36px;
}
.options > * {
    padding: 0 12px;
}
.check {
    display: flex;
    align-items: flex-start;
    gap: 15px;
    font-size: 16px;
    line-height: 25px;
}
.check input {
    flex: none;
    width: 20px;
    height: 20px;
    margin: 0;
    border: 2px solid #5f5f5f;
    border-radius: 2px;
    appearance: none;
}
.check input:checked {
    border-color: #2896f3;
    background: #2896f3;
}
.check input:checked::before {
    content: "";
    display: block;
    width: 6px;
    height: 12px;
    margin: 0 auto;
    border: solid #fff;
    border-width: 0 2px 2px 0;
    transform: rotate(42deg);
}
.reset {
    height: 54px;
    padding: 0 28px;
    border-radius: 2px;
    background: #2896f3;
    box-shadow: 0 2px 4px rgba(0, 0, 0, 0.4);
    font-size: 16px;
}
.field {
    display: flex;
    flex-direction: column;
    width: 33.333%;
    padding: 6px 12px 0;
    font-size: 13px;
    line-height: 20px;
}
.field input {
    height: 46px;
    padding: 0;
    border: none;
    border-bottom: 1px solid #9e9e9e;
    background: none;
    color: #fff;
    outline: none;
}
.force {
    padding: 60px 24px 0;
}
.content-scroll {
    width: 6px;
    margin: 3px 0 4px;
    background: #555;
}
.content-scroll-thumb {
    height: 58%;
    background: #cbcbcb;
}
.tooltip {
    position: absolute;
    top: 221px;
    left: 309px;
    padding: 1px 5px;
    border: 1px solid #55545a;
    outline: 1px solid #161616;
    background: #29272d;
    box-shadow: 0 3px 6px rgba(0, 0, 0, 0.4);
    font: 500 11px/14px "Inter", sans-serif;
}
.footer {
    display: flex;
    align-items: center;
    gap: 4px;
    height: 64px;
    padding: 0 16px;
    background: linear-gradient(#64b5f6 60%, #5ca8e5);
}
.action {
    gap: 15px;
    height: 36px;
    padding: 0 16px;
    border-radius: 2px;
    background: #dfdfdf;
    color: #9f9f9f;
    fill: #9f9f9f;
    font-size: 13px;
}
.action.primary {
    background: #2896f3;
    box-shadow: 0 2px 4px rgba(0, 0, 0, 0.3);
    color: #fff;
    fill: #fff;
}

/* dock */
.dock {
    display: flex;
    gap: 14px;
    margin: 4px auto 5px;
    padding: 9px 9px 14px;
    border: 1px solid rgba(190, 170, 230, 0.3);
    border-radius: 18px;
    background: rgba(62, 56, 92, 0.4);
}
.defs {
    position: absolute;
}
.dock-item {
    position: relative;
    width: 42px;
    height: 42px;
}
.dock-item svg {
    width: 42px;
    height: 42px;
}
.running::after {
    content: "";
    position: absolute;
    bottom: -13px;
    left: 19px;
    width: 4px;
    height: 4px;
    border-radius: 50%;
    background: #b8a2d4;
}
.dock-divider {
    width: 1px;
    margin: -1px 6px -6px;
    background: rgba(190, 150, 220, 0.5);
}
.calendar {
    flex-direction: column;
    justify-content: flex-start;
    overflow: hidden;
    border-radius: 9px;
    background: #f7f7f5;
    color: #333;
}
.month {
    width: 100%;
    background: #ed5650;
    color: #fff;
    font: 600 9px/13px "Inter", sans-serif;
}
.day {
    font: 300 25px/26px "Inter", sans-serif;
}
.tv {
    fill: #fff;
    font: 500 16px "Inter", sans-serif;
}
.color-tile {
    border-radius: 9px;
    background: conic-gradient(#f0a0bd, #50c8d5, #69d3bb, #97c96b, #f5e83a, #f7b838, #f07c50, #ea69ac);
}
```
